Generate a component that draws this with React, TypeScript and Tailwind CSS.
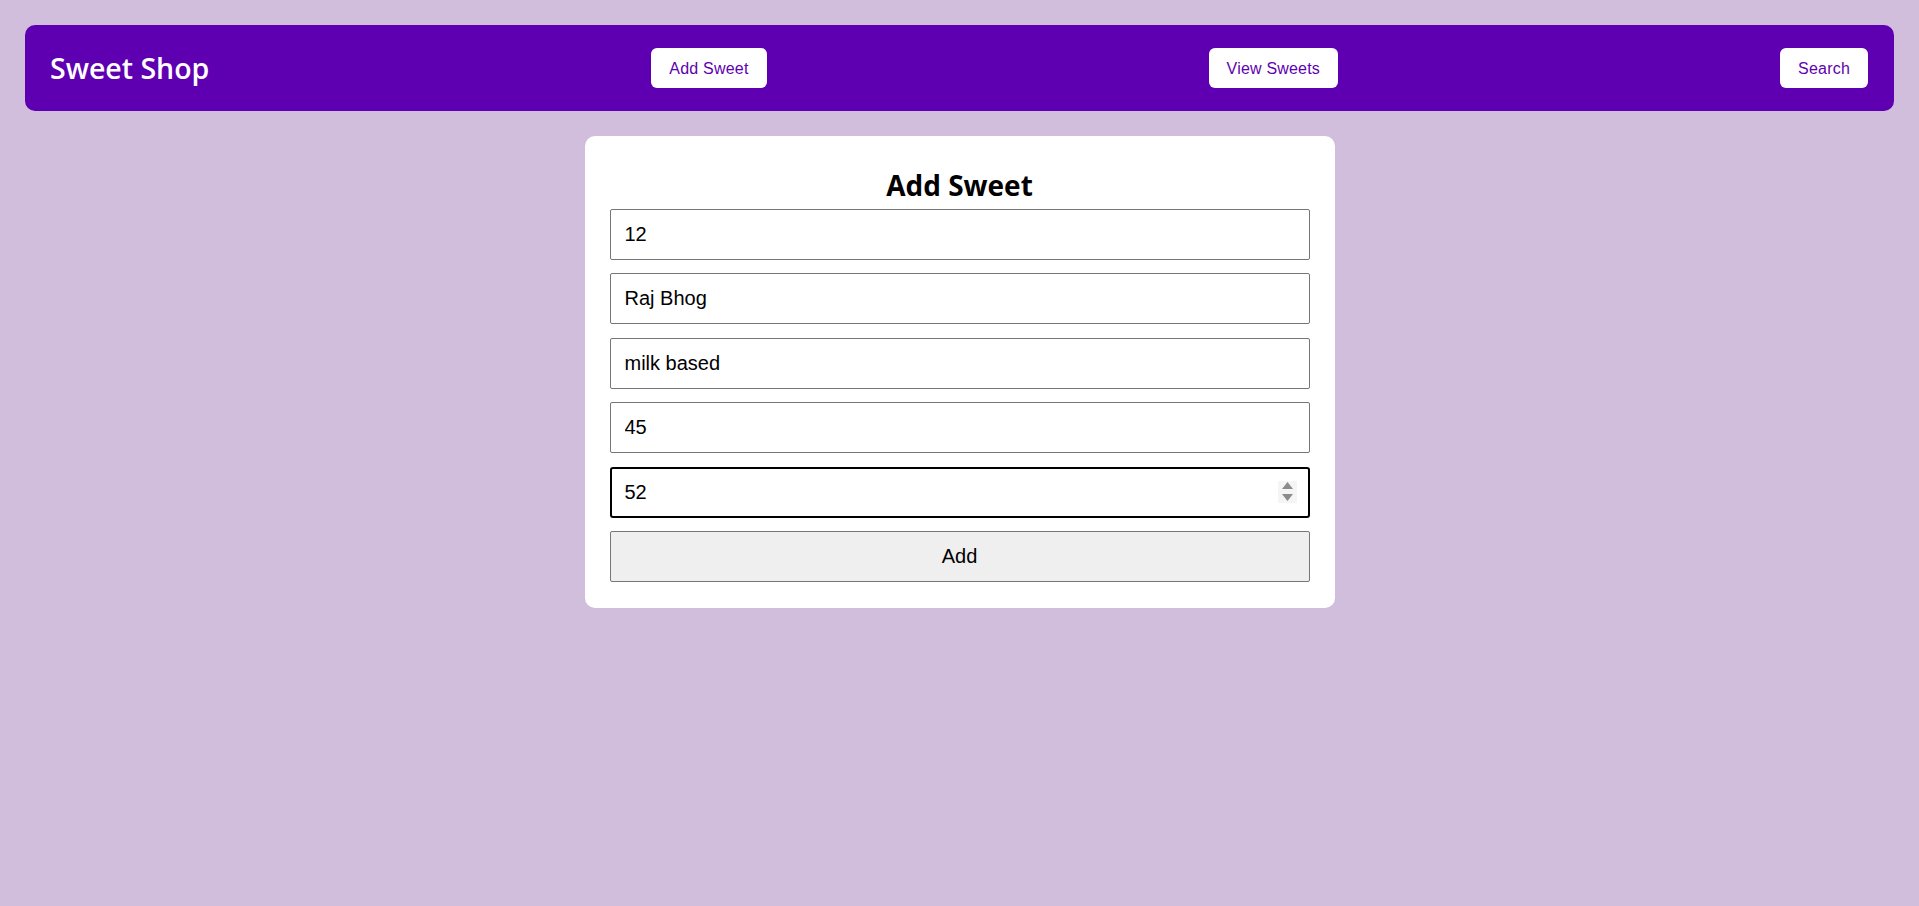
import React from "react";

const inputBase =
  "block w-full h-[51px] bg-white text-black text-[20px] font-['Liberation_Sans',Arial,sans-serif] outline-none";

const navBtn =
  "h-[40px] rounded-[6px] bg-white px-[18px] text-[16px] leading-[19px] tracking-[0.2px] text-[#5e00b1]";

export default function App() {
  return (
    <div className="min-h-[906px] w-full bg-[#d1bedc] p-[25px] font-['Liberation_Sans',Arial,sans-serif]">
      <header className="flex h-[86px] items-center justify-between rounded-[10px] bg-[#5e00b1] pl-[25px] pr-[26px]">
        <h1 className="font-['Open_Sans',sans-serif] text-[28.5px] font-semibold leading-[38px] text-white">
          Sweet Shop
        </h1>
        <button className={navBtn}>Add Sweet</button>
        <button className={navBtn}>View Sweets</button>
        <button className={navBtn}>Search</button>
      </header>

      <main className="mt-[25px] flex justify-center">
        <div className="w-[750px] rounded-[10px] bg-white px-[25px] pb-[26px] pt-[25px]">
          <h2 className="mb-[5px] mt-[5px] text-center font-['Open_Sans',sans-serif] text-[28px] font-bold leading-[38px] text-black">
            Add Sweet
          </h2>
          <div className="flex flex-col gap-[13.4px]">
            <input
              className={`${inputBase} rounded-[2px] border border-[#767676] px-[14px]`}
              defaultValue="12"
            />
            <input
              className={`${inputBase} rounded-[2px] border border-[#767676] px-[14px]`}
              defaultValue="Raj Bhog"
            />
            <input
              className={`${inputBase} rounded-[2px] border border-[#767676] px-[14px]`}
              defaultValue="milk based"
            />
            <input
              className={`${inputBase} rounded-[2px] border border-[#767676] px-[14px]`}
              defaultValue="45"
            />
            <div className="relative">
              <input
                className={`${inputBase} rounded-[3px] border-2 border-black px-[13px]`}
                defaultValue="52"
              />
              <div className="absolute right-[13px] top-[14px] flex h-[22px] w-[19px] flex-col items-center justify-center gap-[5px] bg-[#f5f5f5]">
                <svg width="11" height="7" viewBox="0 0 11 7">
                  <path d="M5.5 0 L11 7 L0 7 Z" fill="#8c8c8c" />
                </svg>
                <svg width="11" height="7" viewBox="0 0 11 7">
                  <path d="M0 0 L11 0 L5.5 7 Z" fill="#8c8c8c" />
                </svg>
              </div>
            </div>
            <button className="block h-[51px] w-full rounded-[2px] border border-[#767676] bg-[#efefef] text-[20px] text-black">
              Add
            </button>
          </div>
        </div>
      </main>
    </div>
  );
}
